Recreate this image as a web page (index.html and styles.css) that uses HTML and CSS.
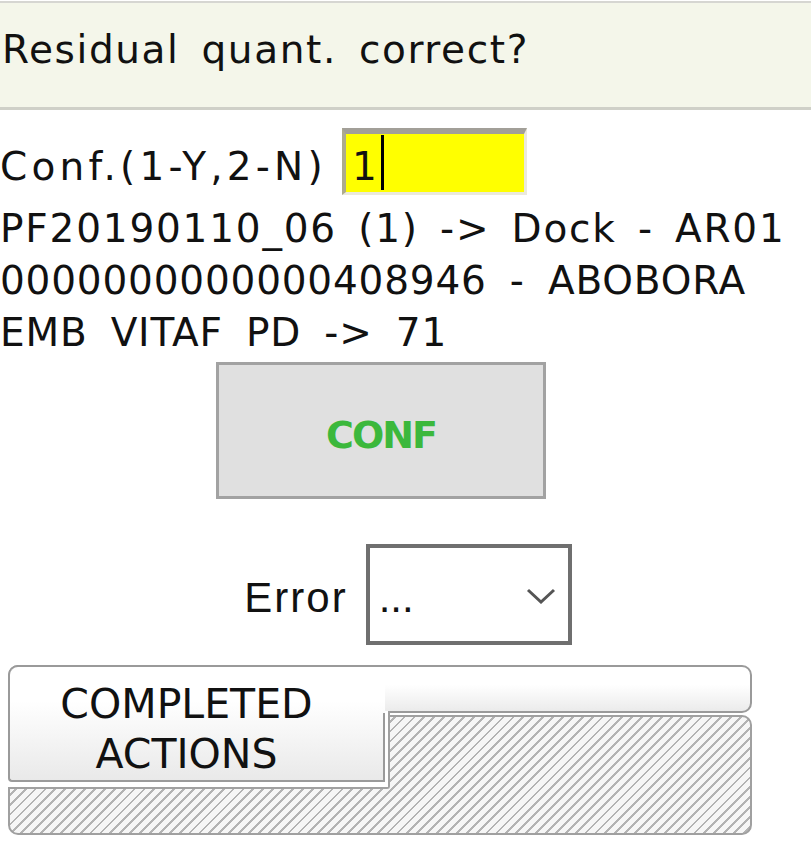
FILE: index.html
```html
<!DOCTYPE html>
<html lang="en">
<head>
    <meta charset="UTF-8">
    <meta name="viewport" content="width=device-width, initial-scale=1.0">
    <title>Residual quantity</title>
    <link rel="stylesheet" href="styles.css">
</head>
<body>
    <div class="header">Residual quant. correct?</div>

    <div class="conf-row">
        <span class="conf-label">Conf.(1-Y,2-N)</span>
        <div class="field"><span>1</span><span class="caret"></span></div>
    </div>

    <div class="info">
        <div class="wide">PF20190110_06 (1) -&gt; Dock - AR01</div>
        <div>0000000000000408946 - ABOBORA</div>
        <div>EMB VITAF PD -&gt; 71</div>
    </div>

    <div class="conf-btn">CONF</div>

    <div class="error-row">
        <span class="error-label">Error</span>
        <div class="select">
            <span class="select-value">...</span>
            <svg class="chevron" width="30" height="16" viewBox="0 0 30 16">
                <polyline points="2,2 15,14 28,2" fill="none" stroke="#555" stroke-width="3"/>
            </svg>
        </div>
    </div>

    <div class="tabs">
        <div class="strip"></div>
        <div class="panel"></div>
        <div class="notch"></div>
        <div class="tab">COMPLETED<br>ACTIONS</div>
    </div>
</body>
</html>
```

FILE: styles.css
```css
body {
    margin: 0;
    font-family: "DejaVu Sans", Verdana, sans-serif;
    font-size: 39px;
    letter-spacing: 0.8px;
    word-spacing: 10px;
    color: #111;
    background-color: #fff;
}

.header {
    margin-top: 1px;
    height: 109px;
    box-sizing: border-box;
    border-top: 2px solid #d6d6d2;
    border-bottom: 3px solid #cfd0c8;
    background-color: #f4f6ea;
    padding: 24px 0 0 2px;
    letter-spacing: 1.6px;
    word-spacing: 8px;
}

.conf-row {
    display: flex;
    align-items: baseline;
    gap: 15px;
    margin-top: 18px;
}
.conf-label {
    letter-spacing: 4.2px;
}
.field {
    display: flex;
    align-items: flex-start;
    width: 185px;
    height: 67px;
    box-sizing: border-box;
    border-style: solid;
    border-width: 6px 3px 3px 4px;
    border-color: #a29f98 #ebe9dc #ebe9dc #aeab8c;
    background-color: #ffff00;
    padding: 10px 0 0 6px;
}
.caret {
    width: 3px;
    height: 55px;
    margin: -9px 0 0 3px;
    background-color: #000;
}

.info {
    margin-top: 8px;
    line-height: 52px;
}
.wide {
    letter-spacing: 1.8px;
    word-spacing: 7px;
}

.conf-btn {
    display: flex;
    justify-content: center;
    align-items: center;
    margin: 3px 0 0 216px;
    width: 330px;
    height: 137px;
    box-sizing: border-box;
    border: 3px solid #a2a2a2;
    background-color: #e0e0e0;
    padding-top: 8px;
    font-weight: bold;
    font-size: 38px;
    letter-spacing: -2px;
    color: #3cb83c;
}

.error-row {
    display: flex;
    justify-content: center;
    align-items: baseline;
    gap: 18px;
    margin-top: 45px;
    padding-left: 5px;
}
.error-label {
    font-family: "Liberation Sans", Arial, sans-serif;
    font-size: 42px;
    letter-spacing: 2px;
}
.select {
    display: flex;
    align-items: flex-start;
    width: 206px;
    height: 101px;
    box-sizing: border-box;
    border: 4px solid #6f6f6f;
    background-color: #fff;
    padding-left: 9px;
}
.select-value {
    margin-top: 26px;
    font-family: "Liberation Sans", Arial, sans-serif;
    font-size: 42px;
    letter-spacing: 0;
}
.chevron {
    margin: 40px 12px 0 auto;
}

.tabs {
    position: relative;
    margin: 20px 0 0 8px;
    width: 744px;
}
.strip {
    height: 48px;
    box-sizing: border-box;
    border: 2px solid #9a9a9a;
    border-radius: 10px;
    background: linear-gradient(#fff 40%, #ebebeb);
}
.panel {
    margin-top: 2px;
    height: 120px;
    box-sizing: border-box;
    border: 2px solid #a0a0a0;
    border-radius: 10px;
    background: repeating-linear-gradient(135deg, #f6f6f6 0 5px, #b3b3b3 5px 7px);
}
.notch {
    position: absolute;
    left: 0;
    top: 46px;
    width: 382px;
    height: 78px;
    box-sizing: border-box;
    border-right: 2px solid #a0a0a0;
    border-bottom: 2px solid #a0a0a0;
    border-bottom-right-radius: 3px;
    background-color: #fff;
}
.tab {
    position: absolute;
    left: 0;
    top: 0;
    width: 377px;
    height: 117px;
    box-sizing: border-box;
    border: 2px solid #9a9a9a;
    border-right: none;
    border-radius: 10px 0 0 4px;
    background: linear-gradient(#fff 30%, #e9e9e9);
    padding: 12px 22px 0 0;
    text-align: center;
    font-size: 41px;
    line-height: 50px;
    letter-spacing: 0;
    word-spacing: 0;
}
.tab::after {
    content: "";
    position: absolute;
    right: 0;
    top: 46px;
    bottom: -2px;
    width: 2px;
    background-color: #9a9a9a;
}
```
